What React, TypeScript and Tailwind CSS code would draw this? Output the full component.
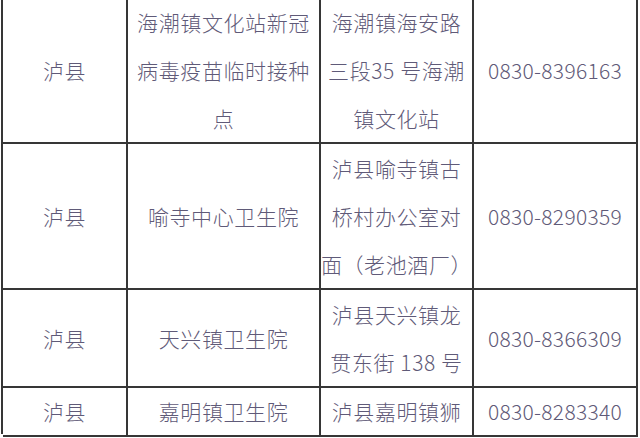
const ROWS: { county: string; site: string[]; addr: string[]; phone: string; h: string }[] = [
  {
    county: "泸县",
    site: ["海潮镇文化站新冠", "病毒疫苗临时接种", "点"],
    addr: ["海潮镇海安路", "三段35 号海潮", "镇文化站"],
    phone: "0830-8396163",
    h: "h-[144px]",
  },
  {
    county: "泸县",
    site: ["喻寺中心卫生院"],
    addr: ["泸县喻寺镇古", "桥村办公室对", "面（老池酒厂）"],
    phone: "0830-8290359",
    h: "h-[146px]",
  },
  {
    county: "泸县",
    site: ["天兴镇卫生院"],
    addr: ["泸县天兴镇龙", "贯东街 138 号"],
    phone: "0830-8366309",
    h: "h-[97px]",
  },
  {
    county: "泸县",
    site: ["嘉明镇卫生院"],
    addr: ["泸县嘉明镇狮"],
    phone: "0830-8283340",
    h: "h-[47px]",
  },
];

const cell =
  "flex flex-col items-center justify-center text-center border-r-2 border-b-2 border-[#363636] leading-[48px] font-light";

export default function App() {
  return (
    <div
      className="w-[640px] h-[438px] bg-white overflow-hidden pl-px text-[#5f5a78]"
      style={{ fontFamily: '"Noto Sans CJK SC", "Noto Sans", sans-serif' }}
    >
      <div className="border-l-2 border-[#363636] w-fit -mt-[2px]">
        {ROWS.map((r, i) => (
          <div key={i} className={`grid grid-cols-[125px_193px_153px_164px] ${i === 0 ? "h-[146px]" : r.h}`}>
            <div className={`${cell} text-[21px] tracking-[0.6px]`}>{r.county}</div>
            <div className={`${cell} text-[21px] tracking-[0.6px]`}>
              {r.site.map((l) => (
                <span key={l}>{l}</span>
              ))}
            </div>
            <div className={`${cell} text-[21px] tracking-[0.6px]`}>
              {r.addr.map((l) => (
                <span key={l} className="whitespace-nowrap">{l}</span>
              ))}
            </div>
            <div className={`${cell} text-[21px] tracking-[0.3px]`}>{r.phone}</div>
          </div>
        ))}
      </div>
    </div>
  );
}
